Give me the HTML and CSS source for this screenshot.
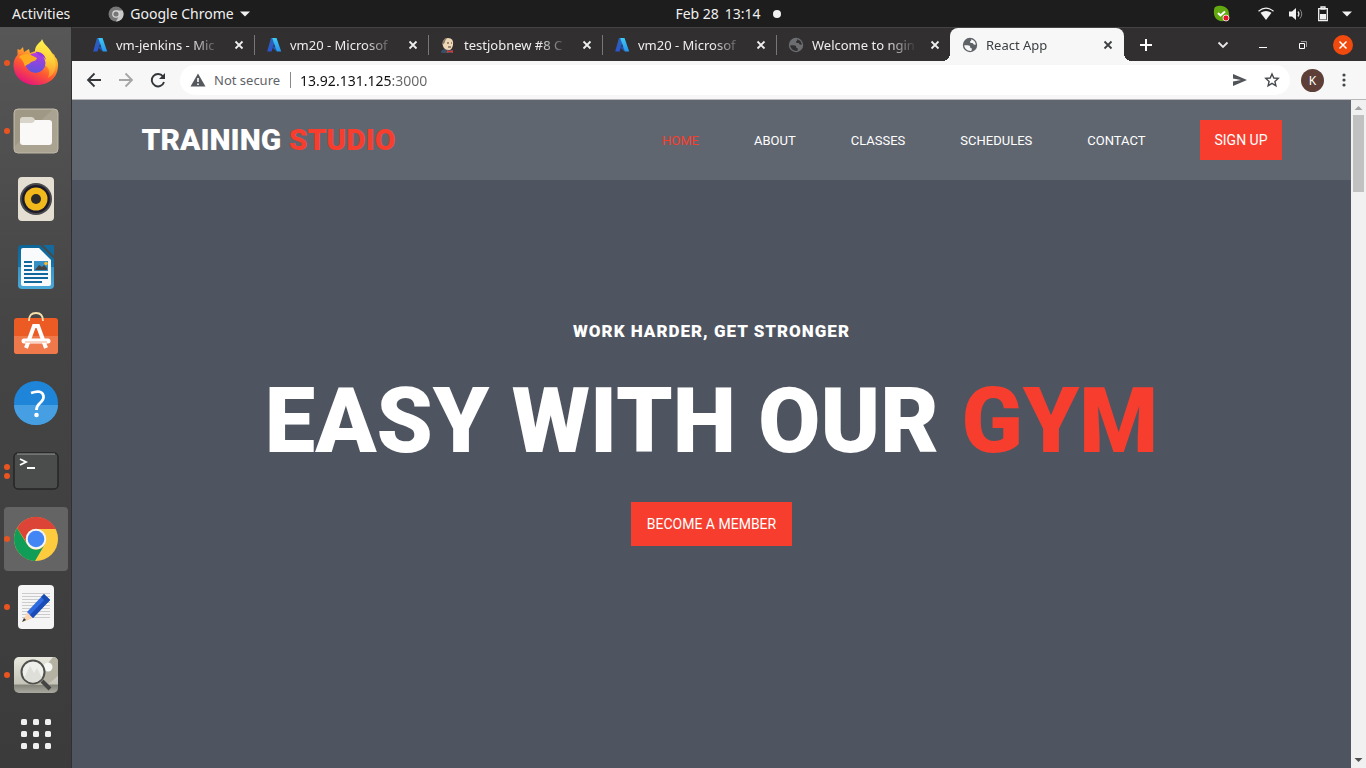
FILE: index.html
```html
<!DOCTYPE html>
<html lang="en">
<head>
<meta charset="utf-8">
<title>React App</title>
<link rel="stylesheet" href="styles.css">
</head>
<body>
<svg class="defs" aria-hidden="true">
  <defs>
    <linearGradient id="az1" x1="0" y1="0" x2="0" y2="1"><stop offset="0" stop-color="#2f62b4"/><stop offset="1" stop-color="#2a55cf"/></linearGradient>
    <linearGradient id="az2" x1="0" y1="0" x2="0" y2="1"><stop offset="0" stop-color="#3ccbf4"/><stop offset="1" stop-color="#2893ef"/></linearGradient>
    <linearGradient id="ff1" x1=".8" y1="0" x2=".3" y2="1"><stop offset="0" stop-color="#fff44f"/><stop offset=".35" stop-color="#ffb42a"/><stop offset=".65" stop-color="#ff5a30"/><stop offset="1" stop-color="#e4127e"/></linearGradient>
    <linearGradient id="ff2" x1=".6" y1="0" x2=".5" y2="1"><stop offset="0" stop-color="#fff550"/><stop offset=".5" stop-color="#ffd23a"/><stop offset="1" stop-color="#ff8a2a"/></linearGradient>
    <linearGradient id="ff3" x1=".5" y1="0" x2=".4" y2="1"><stop offset="0" stop-color="#b53be0"/><stop offset="1" stop-color="#5b54dc"/></linearGradient>
    <linearGradient id="wr" x1="0" y1="0" x2="0" y2="1"><stop offset="0" stop-color="#0e6698"/><stop offset=".5" stop-color="#1474a8"/><stop offset=".51" stop-color="#3795c6"/><stop offset="1" stop-color="#4aa9d8"/></linearGradient>
    <linearGradient id="img" x1="0" y1="0" x2="0" y2="1"><stop offset="0" stop-color="#e9e9df"/><stop offset=".75" stop-color="#c4c3b6"/><stop offset=".78" stop-color="#85847b"/><stop offset="1" stop-color="#aaa99f"/></linearGradient>
    <symbol id="azure" viewBox="0 0 16 16"><path d="M5 1h5L5.500 14.500H1.200z" fill="url(#az1)"/><path d="M5 9.500h6L10.500 14.500z" fill="#2455a8"/><path d="M6.200 1h4.300l4.700 13.500h-4.400z" fill="url(#az2)"/></symbol>
    <symbol id="globe" viewBox="0 0 16 16"><circle cx="8" cy="8" r="7.200" fill="currentColor"/><path d="M9 2.300c2.600.5 4.700 2.600 4.800 5.300-1.300.4-2.300.1-2.600-.9-.2-1-1.200-.7-2.200-.8-1.400-.2-1.400-1.500-.3-1.900.7-.3.500-.8.300-1.700zM2.200 8.300h3.300c1.700 0 2.800.9 2.800 2.200 0 .6.400.8 1 .8.700 0 .7.700.5 1.300l-.6 1.300C5.600 14.300 2.500 12 2.200 8.300z" fill="var(--land)"/></symbol>
    <symbol id="close" viewBox="0 0 16 16"><path d="m4.500 4.500 7 7m0-7-7 7" fill="none" stroke="currentColor" stroke-width="1.800"/></symbol>
  </defs>
</svg>

<header class="topbar">
  <div class="topbar-left">
    <button class="top-item" type="button">Activities</button>
    <button class="top-item" type="button">
      <svg width="16" height="16" viewBox="0 0 16 16"><circle cx="8" cy="8" r="7.500" fill="#777"/><path d="M8 4.500h6.700A7.500 7.500 0 0 1 8 15.500l3-5.500z" fill="#c9c9c9"/><circle cx="8" cy="8" r="3.800" fill="#ddd"/><circle cx="8" cy="8" r="2.600" fill="#777"/></svg>
      <span>Google Chrome</span>
      <svg width="10" height="6" viewBox="0 0 10 6"><path d="M0 .5h10L5 5.500z" fill="#f2f2f2"/></svg>
    </button>
  </div>
  <button class="top-item clock" type="button"><span>Feb 28</span><span>13:14</span><i class="notice"></i></button>
  <div class="topbar-right">
    <svg class="skype" width="17" height="17" viewBox="0 0 17 17"><path d="M1 5C1 2 3 1 5 1c7-1 11 3 11 8 1 4-1 7-5 7C4 17 0 12 1 5z" fill="#62a811"/><path d="m5 8 2.500 2.500L12 6.500" stroke="#fff" stroke-width="2" fill="none"/><circle cx="13" cy="13" r="3" fill="#e8112d" stroke="#fff" stroke-width=".8"/></svg>
    <svg width="16" height="14" viewBox="0 0 16 14"><path d="M.5 4.200Q8-1.800 15.500 4.200" fill="none" stroke="#f2f2f2" stroke-width="1.200"/><path d="M2.500 5.800Q8 2 13.500 5.800L8 13z" fill="#f2f2f2"/></svg>
    <svg width="16" height="14" viewBox="0 0 16 14"><path d="M1 4.500h3L8 1v12L4 9.500H1z" fill="#f2f2f2"/><path d="M10 4.500q1.800 2.500 0 5" fill="none" stroke="#ddd" stroke-width="1.300"/><path d="M12 2.500q3.500 4.500 0 9" fill="none" stroke="#888"/></svg>
    <svg width="10" height="16" viewBox="0 0 10 16"><path d="M3 1h4v2H3zM.7 2.700h8.600v12H.7z" fill="none" stroke="#f2f2f2" stroke-width="1.300"/><path d="M2 8h6v5.500H2z" fill="#f2f2f2"/></svg>
    <svg width="10" height="6" viewBox="0 0 10 6"><path d="M0 .5h10L5 5.500z" fill="#f2f2f2"/></svg>
  </div>
</header>

<div class="desktop">
  <nav class="dock" aria-label="Dock">
    <button class="app" type="button" aria-label="Firefox"><i class="dots"><b></b></i>
      <svg width="46" height="48" viewBox="0 0 46 48"><path d="M7 11l3-3 1 5 5-3 1 4 8-3 4-11c2 6 7 8 10 14 2 1 3 3 3 4 2 1 3 5 3 8 0 13-9 20-22 20S.500 38 .500 26c0-5 2-8 4-10l0-6z" fill="url(#ff1)"/><path d="M29 1c2 6 8 8 10 14 6 9 5 19-4 24 3-8 0-12-5-13-2-6-9-8-8-14 0-5 4-8 7-11z" fill="url(#ff2)"/><circle cx="22.500" cy="24" r="10" fill="url(#ff3)"/><path d="M6 18c3-3 9-4 12-2l6 3c-1 4-6 3-7 5-2 2-5 2-5 4-1-3-1-6-6-10z" fill="#ffab20"/><path d="M22 13c6-1 10 3 11 8-2-3-4-4-6-4z" fill="#9337df"/></svg></button>
    <button class="app" type="button" aria-label="Files"><i class="dots"><b></b></i>
      <svg width="46" height="46" viewBox="0 0 46 46"><rect x="1" y="1" width="44" height="44" rx="4" fill="#aaa391" stroke="#bfb8a6"/><path d="M2 38V5q0-3 3-3h34z" fill="#9f9885"/><path d="M7 12q0-3 3-3h8q3 0 4 3v5H7z" fill="#d8d4ca"/><path d="M7 15h12q2 0 3-3h14q3 0 3 3v19q0 3-3 3H10q-3 0-3-3z" fill="#faf9f7"/></svg></button>
    <button class="app" type="button" aria-label="Rhythmbox">
      <svg width="46" height="46" viewBox="0 0 46 46"><rect x="5" y="1" width="36" height="44" rx="4" fill="#e4dfd2"/><circle cx="23" cy="23" r="16" fill="#49484b"/><circle cx="23" cy="23" r="14" fill="#1d1a2c"/><circle cx="23" cy="23" r="11.500" fill="#f1b91b"/><circle cx="23" cy="23" r="5" fill="#2b2b2b"/></svg></button>
    <button class="app" type="button" aria-label="LibreOffice Writer">
      <svg width="46" height="46" viewBox="0 0 46 46"><path d="M8 1h19l14 14v26q0 4-4 4H9q-4 0-4-4V5q0-4 3-4z" fill="url(#wr)"/><path d="M30 1h10q1 0 1 1v10z" fill="#146a9d"/><path d="M10 4h16l12 12v24q0 2-2 2H10q-2 0-2-2V6q0-2 2-2z" fill="#f9fafb"/><path d="M11 18h8m-8 4h8m-8 4h8m-8 4h24m-24 4h24m-24 4h18" stroke="#12689b" stroke-width="2"/><path d="M21 17h14v10H21z" fill="#3490c5"/><path d="m22 26 4-5 3 2 2-2 3 3v2z" fill="#444"/><circle cx="33" cy="19.500" r="1.800" fill="#f9b928"/></svg></button>
    <button class="app" type="button" aria-label="Software">
      <svg width="46" height="46" viewBox="0 2 46 46"><rect x="1" y="8" width="44" height="36" rx="3" fill="#ed5b25"/><path d="M1 26h44v15q0 3-3 3H4q-3 0-3-3z" fill="#f0794c"/><path d="M16 11q0-8 7-8t7 8" fill="none" stroke="#f5e0ad" stroke-width="1.800"/><path d="m13 38 8-22h4l8 22" fill="none" stroke="#fff" stroke-width="4"/><path d="M11 31h24" stroke="#fff" stroke-width="5" stroke-linecap="round"/><path d="M12 32h22" stroke="#f3aa8e"/></svg></button>
    <button class="app" type="button" aria-label="Help">
      <svg width="46" height="46" viewBox="0 0 46 46"><circle cx="23" cy="23" r="22" fill="#1e85d8"/><path d="M1 25h44a22 20 0 0 1-44 0z" fill="#459fe2"/><path d="M18 13q11-4 12.500 3 .5 3.500-3.500 7-3.500 3-3.500 7" fill="none" stroke="#fff" stroke-width="2.800"/><circle cx="23.500" cy="35" r="2.300" fill="#fff"/></svg></button>
    <button class="app" type="button" aria-label="Terminal"><i class="dots"><b></b><b></b></i>
      <svg width="46" height="46" viewBox="0 0 46 46"><rect x="1" y="5" width="44" height="36" rx="4" fill="#4b4c4c" stroke="#252525" stroke-width="1.500"/><path d="M4 6h38" stroke="#999"/><path d="m7 11 6 3-6 3M14 20h8" fill="none" stroke="#fff" stroke-width="1.800"/></svg></button>
    <button class="app current" type="button" aria-label="Google Chrome"><i class="dots"><b></b></i>
      <svg width="46" height="46" viewBox="0 0 46 46"><circle cx="23" cy="23" r="22" fill="#fdcb3e"/><path d="M4 12a22 22 0 0 1 39 1H23a10 10 0 0 0-9 14z" fill="#db4437"/><path d="M4 12a22 22 0 0 0 18 33l10-17a10 10 0 0 1-18 0z" fill="#109d58"/><circle cx="23" cy="23" r="10.300" fill="#f5f5f5"/><circle cx="23" cy="23" r="8.300" fill="#4285f4"/></svg></button>
    <button class="app" type="button" aria-label="Text Editor"><i class="dots"><b></b></i>
      <svg width="46" height="46" viewBox="0 0 46 46"><rect x="5" y="1" width="36" height="44" rx="4" fill="#f5f5f5"/><path d="M9 9.500h28m-28 3h28m-28 3h28m-28 3h28m-28 3h28m-28 3h28m-28 3h28m-28 3h28m-28 3h28" stroke="#ccc"/><path d="m10 38 4-10 6 6z" fill="#f9d5b2"/><path d="m9 38 2-4 2 2z" fill="#333"/><path d="m14 28 17-18 6 6-17 18z" fill="#2f6ae0"/><path d="m17 31 17-18 3 3-17 18z" fill="#1b4bb7"/><path d="m28 13 3-3 6 6-3 3z" fill="#164ab0"/></svg></button>
    <button class="app" type="button" aria-label="Image Viewer"><i class="dots"><b></b></i>
      <svg width="46" height="46" viewBox="0 0 46 46"><rect x="1" y="5" width="44" height="36" rx="5" fill="url(#img)"/><path d="M40 5q5 0 5 5v14L34 33H17z" fill="#b5b2a4"/><circle cx="35" cy="15" r="4.500" fill="#f6f6f3"/><circle cx="20" cy="20" r="11.500" fill="#efefeb" stroke="#50514e" stroke-width="2"/><path d="m11 26 6-12 4 7 3-5 5 10q-9 9-18 0z" fill="#dfdfd9"/><path d="m29 29 8 8" stroke="#444" stroke-width="4"/></svg></button>
    <button class="app show-apps" type="button" aria-label="Show Applications"><svg width="30" height="30" viewBox="0 0 30 30" fill="#f0f0f0"><rect width="6" height="6" rx="1.500"/><rect x="12" width="6" height="6" rx="1.500"/><rect x="24" width="6" height="6" rx="1.500"/><rect y="12" width="6" height="6" rx="1.500"/><rect x="12" y="12" width="6" height="6" rx="1.500"/><rect x="24" y="12" width="6" height="6" rx="1.500"/><rect y="24" width="6" height="6" rx="1.500"/><rect x="12" y="24" width="6" height="6" rx="1.500"/><rect x="24" y="24" width="6" height="6" rx="1.500"/></svg></button>
  </nav>

  <div class="browser">
    <div class="tabstrip">
      <div class="tab first"><svg class="icon"><use href="#azure"/></svg><button class="title" type="button">vm-jenkins - Mic</button><button class="x" type="button" aria-label="Close tab"><svg class="icon"><use href="#close"/></svg></button></div>
      <div class="tab"><svg class="icon"><use href="#azure"/></svg><button class="title" type="button">vm20 - Microsof</button><button class="x" type="button" aria-label="Close tab"><svg class="icon"><use href="#close"/></svg></button></div>
      <div class="tab"><svg class="icon" viewBox="0 0 16 16"><path d="M1 16q0-4 5-4l6 1 1 3z" fill="#365166"/><path d="M3 5q1-4 5-4 6 0 5 7-1 5-4 5-5 0-6-4-1-2 0-4z" fill="#efd6b5"/><path d="M2.500 8q-1-6 5-7-3 2-3 5z" fill="#85786a"/><path d="M7 6h2m2 0h1M8 10h3" stroke="#453a35"/><path d="m7 13 3 1 3-1v3l-3-1-3 1z" fill="#d33833"/></svg><button class="title" type="button">testjobnew #8 C</button><button class="x" type="button" aria-label="Close tab"><svg class="icon"><use href="#close"/></svg></button></div>
      <div class="tab"><svg class="icon"><use href="#azure"/></svg><button class="title" type="button">vm20 - Microsof</button><button class="x" type="button" aria-label="Close tab"><svg class="icon"><use href="#close"/></svg></button></div>
      <div class="tab"><svg class="icon globe"><use href="#globe"/></svg><button class="title" type="button">Welcome to ngin</button><button class="x" type="button" aria-label="Close tab"><svg class="icon"><use href="#close"/></svg></button></div>
      <div class="tab active"><svg class="icon globe"><use href="#globe"/></svg><button class="title" type="button">React App</button><button class="x" type="button" aria-label="Close tab"><svg class="icon"><use href="#close"/></svg></button></div>
      <button class="new-tab" type="button" aria-label="New tab"><svg width="14" height="14" viewBox="0 0 14 14"><path d="M7 1v12M1 7h12" stroke="#fff" stroke-width="2"/></svg></button>
      <div class="window-controls">
        <button class="ctl" type="button" aria-label="Search tabs"><svg width="12" height="8" viewBox="0 0 12 8"><path d="m1.500 1.500 4.500 4.500 4.500-4.500" fill="none" stroke="#e8e8e8" stroke-width="1.800"/></svg></button>
        <button class="ctl" type="button" aria-label="Minimize"><svg width="8" height="6" viewBox="0 0 8 6"><path d="M0 5.500h8" stroke="#fff"/></svg></button>
        <button class="ctl" type="button" aria-label="Restore"><svg width="8" height="8" viewBox="0 0 8 8"><path d="M.5 2.500h5v5h-5z" fill="none" stroke="#fff"/><path d="M2 .5h5.500V6" fill="none" stroke="#999"/></svg></button>
        <button class="ctl" type="button" aria-label="Close"><svg width="20" height="20" viewBox="0 0 20 20"><circle cx="10" cy="10" r="10" fill="#f04a0e"/><path d="m6.500 6.500 7 7m0-7-7 7" stroke="#fff" stroke-width="1.500"/></svg></button>
      </div>
    </div>

    <div class="toolbar">
      <button class="tool" type="button" aria-label="Back"><svg width="16" height="16" viewBox="0 0 16 16"><path d="M15 8H2m6.500-6.500L2 8l6.500 6.500" fill="none" stroke="#333639" stroke-width="1.800"/></svg></button>
      <button class="tool" type="button" aria-label="Forward"><svg width="16" height="16" viewBox="0 0 16 16"><path d="M1 8h13M7.500 1.500 14 8l-6.500 6.500" fill="none" stroke="#a5a5a5" stroke-width="1.800"/></svg></button>
      <button class="tool" type="button" aria-label="Reload"><svg width="16" height="16" viewBox="0 0 16 16"><path d="M13 4.500A6.200 6.200 0 1 0 14 10" fill="none" stroke="#333639" stroke-width="1.900"/><path d="M15 1v6H9z" fill="#333639"/></svg></button>
      <form class="omnibox">
        <svg width="16" height="14" viewBox="0 0 16 14"><path d="M8 .5 15.500 13.500H.5z" fill="#55595e"/><path d="M8 5v4m0 1.500v1.500" stroke="#fff" stroke-width="1.600"/></svg>
        <label class="secure" for="url">Not secure</label>
        <input class="url" id="url" type="text" value="13.92.131.125:3000">
        <button class="mini" type="button" aria-label="Send"><svg width="16" height="14" viewBox="0 0 16 14"><path d="M1 1 15 7 1 13V8.500L9 7 1 5.500z" fill="#505357"/></svg></button>
        <button class="mini" type="button" aria-label="Bookmark"><svg width="16" height="16" viewBox="0 0 16 16"><path d="m8 2 1.800 4 4.400.4-3.300 3 1 4.400L8 11.400l-3.900 2.400 1-4.400-3.300-3L6.200 6z" fill="none" stroke="#44474b" stroke-width="1.400"/></svg></button>
      </form>
      <button class="avatar" type="button">K</button>
      <button class="kebab" type="button" aria-label="Menu"><svg width="4" height="14" viewBox="0 0 4 14" fill="#45484b"><circle cx="2" cy="2" r="1.600"/><circle cx="2" cy="7" r="1.600"/><circle cx="2" cy="12" r="1.600"/></svg></button>
    </div>

    <div class="viewport">
      <div class="site">
        <header class="site-header">
          <div class="container">
            <a class="logo" href="#">TRAINING <em>STUDIO</em></a>
            <nav class="site-nav">
              <a class="selected" href="#">HOME</a>
              <a href="#">ABOUT</a>
              <a href="#">CLASSES</a>
              <a href="#">SCHEDULES</a>
              <a href="#">CONTACT</a>
              <a class="signup" href="#">SIGN UP</a>
            </nav>
          </div>
        </header>
        <main class="hero">
          <p class="tagline">WORK HARDER, GET STRONGER</p>
          <h1 class="headline">EASY WITH OUR <em>GYM</em></h1>
          <a class="cta" href="#">BECOME A MEMBER</a>
        </main>
      </div>
      <div class="scrollbar" aria-hidden="true">
        <svg width="15" height="15" viewBox="0 0 15 15"><path d="m3.500 10 4-4 4 4z" fill="#a3a3a3"/></svg>
        <i class="thumb"></i>
        <svg class="down" width="15" height="15" viewBox="0 0 15 15"><path d="m3.500 5 4 4 4-4z" fill="#505050"/></svg>
      </div>
    </div>
  </div>
</div>
</body>
</html>
```

FILE: styles.css
```css
* { box-sizing: border-box; }

body {
  margin: 0;
  height: 100vh;
  display: flex;
  flex-direction: column;
  overflow: hidden;
  font-family: "Noto Sans", "Open Sans", sans-serif;
  font-size: 13px;
}

button {
  border: 0;
  padding: 0;
  background: none;
  font: inherit;
  color: inherit;
}

a { text-decoration: none; color: inherit; }
em { font-style: normal; color: #f73e2e; }
svg { flex: none; display: block; }
.defs { position: absolute; width: 0; height: 0; }
.icon { width: 16px; height: 16px; }

/* Desktop top bar */
.topbar {
  flex: none;
  height: 27px;
  display: grid;
  grid-template-columns: 1fr auto 1fr;
  align-items: center;
  padding: 0 14px 0 12px;
  background: #1d1d1d;
  color: #f0f0f0;
  font-size: 14px;
}
.topbar-left, .topbar-right, .top-item { display: flex; align-items: center; }
.topbar-left { gap: 38px; }
.top-item { gap: 6px; }
.clock { padding-left: 92px; }
.notice { width: 8px; height: 8px; margin-left: 6px; border-radius: 50%; background: #f2f2f2; }
.topbar-right { justify-content: flex-end; gap: 14px; }
.skype { margin-right: 14px; }

.desktop { flex: 1; min-height: 0; display: flex; }

/* Dock */
.dock {
  flex: none;
  width: 72px;
  display: flex;
  flex-direction: column;
  gap: 4px;
  padding: 4px 3px 0 4px;
  border-right: 1px solid #303030;
  background: linear-gradient(#575757, #454545 40%, #3b3b3b);
}
.app {
  position: relative;
  flex: none;
  width: 64px;
  height: 64px;
  display: grid;
  place-items: center;
  border-radius: 4px;
}
.app.current { background: #646464; }
.app.show-apps { height: 46px; }
.dots {
  position: absolute;
  left: 0;
  top: 0;
  height: 100%;
  display: flex;
  flex-direction: column;
  justify-content: center;
  gap: 3px;
}
.dots b { width: 6px; height: 6px; border-radius: 50%; background: #e95420; }

/* Browser chrome */
.browser { flex: 1; min-width: 0; display: flex; flex-direction: column; }
.tabstrip {
  flex: none;
  height: 34px;
  display: flex;
  align-items: center;
  padding: 0 3px 0 8px;
  background: #322f30;
  border-top: 1px solid #454344;
  color: #eee;
}
.tab {
  --land: #322f30;
  flex: 0 1 174px;
  min-width: 0;
  height: 20px;
  display: flex;
  align-items: center;
  gap: 8px;
  padding: 0 7px 0 11px;
  border-left: 1px solid #777;
}
.tab.first { border-color: transparent; }
.tab .globe { color: #6b6d70; }
.title {
  flex: 1;
  min-width: 0;
  text-align: left;
  white-space: nowrap;
  -webkit-mask-image: linear-gradient(to right, #000 70%, transparent 98%);
  mask-image: linear-gradient(to right, #000 70%, transparent 98%);
}
.tab.active {
  --land: #f7f7f7;
  position: relative;
  height: 33px;
  border: 0;
  padding: 0 8px 0 12px;
  border-radius: 8px 8px 0 0;
  background: #f7f7f7;
  color: #3c4043;
}
.tab.active::before, .tab.active::after {
  content: "";
  position: absolute;
  bottom: 0;
  width: 8px;
  height: 8px;
}
.tab.active::before { right: 100%; background: radial-gradient(circle at 0 0, transparent 8px, #f7f7f7 8px); }
.tab.active::after { left: 100%; background: radial-gradient(circle at 100% 0, transparent 8px, #f7f7f7 8px); }
.tab.active .globe { color: #5f6368; }
.new-tab { width: 44px; display: grid; place-items: center; }
.window-controls { margin-left: auto; display: flex; }
.ctl { width: 40px; height: 32px; display: grid; place-items: center; }

.toolbar {
  flex: none;
  height: 39px;
  display: flex;
  align-items: center;
  padding: 0 14px 0 6px;
  background: #f7f7f7;
  border-bottom: 1px solid #b8b8b8;
}
.tool { width: 32px; height: 32px; display: grid; place-items: center; }
.omnibox {
  flex: 1;
  min-width: 0;
  height: 30px;
  display: flex;
  align-items: center;
  margin: 0 11px 0 6px;
  padding: 0 10px;
  border-radius: 15px;
  background: #fff;
}
.secure { margin-left: 8px; padding-right: 10px; border-right: 1px solid #888; line-height: 16px; color: #5f6368; }
.url {
  flex: 1;
  min-width: 0;
  border: 0;
  padding: 0 0 0 9px;
  outline: 0;
  font: inherit;
  font-size: 14px;
  color: transparent;
  background: linear-gradient(to right, #111 101px, #666 101px);
  -webkit-background-clip: text;
  background-clip: text;
}
.mini { width: 16px; margin-left: 16px; }
.avatar { width: 23px; height: 23px; border-radius: 50%; background: #5d3f37; color: #fff; font-size: 12px; }
.kebab { width: 16px; margin-left: 12px; display: grid; place-items: center; }

/* Web page */
.viewport { flex: 1; min-height: 0; display: flex; }
.site {
  flex: 1;
  min-width: 0;
  display: flex;
  flex-direction: column;
  background: #4f5560;
  color: #fff;
  font-family: Roboto, sans-serif;
}
.site-header { background: #606670; }
.container {
  max-width: 1140px;
  height: 80px;
  margin: 0 auto;
  display: flex;
  align-items: center;
  justify-content: space-between;
}
.logo { padding-bottom: 2px; font-size: 30px; font-weight: 900; }
.site-nav { display: flex; align-items: center; gap: 55px; font-size: 13px; }
.selected { color: #f73e2e; }
.signup { padding: 0 14px; background: #f73e2e; font-size: 14px; line-height: 40px; }
.hero { display: flex; flex-direction: column; align-items: center; padding-top: 140px; text-align: center; }
.tagline { margin: 0 0 30px; font-size: 17px; line-height: 22px; font-weight: 900; letter-spacing: 1px; }
.headline { margin: 0 0 30px; font-size: 90px; line-height: 100px; font-weight: 900; }
.cta { padding: 0 16px; background: #f73e2e; font-size: 14px; line-height: 44px; }

.scrollbar { flex: none; width: 15px; display: flex; flex-direction: column; align-items: center; background: #f1f1f1; }
.thumb { width: 11px; height: 77px; background: #c1c1c1; }
.down { margin-top: auto; }
```
